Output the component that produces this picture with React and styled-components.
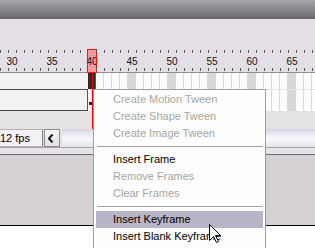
import React from 'react'
import styled, { createGlobalStyle } from 'styled-components'

const GlobalStyle = createGlobalStyle`
  html, body { margin: 0; padding: 0; background: #fff; }
  body { font-family: "Liberation Sans", Arial, sans-serif; }
`

const FIRST_FRAME = 29
const LAST_FRAME = 68
const LAYER_WIDTH = 88
const CURRENT = 40

const rulerFrames = []
for (let f = FIRST_FRAME; f <= LAST_FRAME; f++) rulerFrames.push(f)
const rowFrames = rulerFrames.filter((f) => f >= CURRENT)

const menuItems = [
  { label: 'Create Motion Tween', disabled: true },
  { label: 'Create Shape Tween', disabled: true },
  { label: 'Create Image Tween', disabled: true },
  { sep: true },
  { label: 'Insert Frame' },
  { label: 'Remove Frames', disabled: true },
  { label: 'Clear Frames', disabled: true },
  { sep: true },
  { label: 'Insert Keyframe', active: true },
  { label: 'Insert Blank Keyframe' },
]

const Timeline = () => {
  return (
    <Window>
      <GlobalStyle />
      <TitleBar />
      <ToolStrip />
      <Ruler>
        {rulerFrames.map((f) => (
          <RulerCell key={f} $current={f === CURRENT}>
            {f % 5 === 0 && <RulerNum>{f}</RulerNum>}
          </RulerCell>
        ))}
      </Ruler>

      <Row>
        <LayerName $height={16} />
        <Frames $line>
          {rowFrames.map((f) => (
            <FrameCell key={f} $kind={f === CURRENT ? 'key' : f % 5 === 0 ? 'fifth' : 'plain'} />
          ))}
        </Frames>
      </Row>
      <Row>
        <LayerBox />
        <Frames>
          {rowFrames.map((f) => (
            <FrameCell key={f} $kind={f === CURRENT ? 'blank' : f % 5 === 0 ? 'fifth' : 'plain'}>
              {f === CURRENT && <KeyDot />}
            </FrameCell>
          ))}
        </Frames>
      </Row>

      <GapStrip />

      <StatusBar>
        <FpsBox>12 fps</FpsBox>
        <ArrowButton>
          <svg width="6" height="9" viewBox="0 0 6 9">
            <path d="M4.5 0.5 L1 4.5 L4.5 8.5" fill="none" stroke="#111" strokeWidth="2" />
          </svg>
        </ArrowButton>
        <Track />
      </StatusBar>
      <BottomEdge />
      <Stage />

      <PlayLine />

      <Menu>
        {menuItems.map((item, i) =>
          item.sep ? (
            <Separator key={i} />
          ) : (
            <MenuItem key={i} $disabled={item.disabled} $active={item.active}>
              {item.label}
            </MenuItem>
          )
        )}
      </Menu>

      <Cursor width="13" height="20" viewBox="0 0 13 20">
        <path
          d="M0.5 0.5 L0.5 16.5 L4.5 12.5 L7.5 18.5 L9.5 17.5 L6.5 11.5 L11.5 11.5 Z"
          fill="#fff"
          stroke="#000"
          strokeWidth="1"
        />
      </Cursor>
    </Window>
  )
}

const Window = styled.div`
  position: relative;
  width: 315px;
  height: 248px;
  overflow: hidden;
  background: #fff;
  font-family: "Liberation Sans", Arial, sans-serif;
  font-size: 11px;
`

const TitleBar = styled.div`
  height: 19px;
  background: linear-gradient(#a8a6aa, #8c8a8e 45%, #68666a);
`

const ToolStrip = styled.div`
  height: 30px;
  background: #e4dfe6;
`

const Ruler = styled.div`
  display: flex;
  height: 23px;
  background: #e4dfe6;
  border-bottom: 1px solid #8e8c90;
`

const RulerCell = styled.div`
  flex: none;
  width: 8px;
  box-sizing: border-box;
  display: flex;
  justify-content: center;
  padding-top: 8px;
  background: ${(p) =>
    p.$current
      ? '#f59ba0'
      : `linear-gradient(#555, #555) 0 1px / 1px 3px no-repeat,
         linear-gradient(#555, #555) 0 19px / 1px 3px no-repeat`};
  outline: ${(p) => (p.$current ? '1px solid #ff1010' : 'none')};
  margin-top: ${(p) => (p.$current ? '1px' : '0')};
  ${(p) => p.$current && 'padding-top: 7px;'}
`

const RulerNum = styled.span`
  font-size: 10px;
  line-height: 10px;
  color: #111;
  white-space: nowrap;
`

const Row = styled.div`
  display: flex;
`

const LayerName = styled.div`
  flex: none;
  width: ${LAYER_WIDTH}px;
  height: 16px;
  background: #f3f1f3;
  border-bottom: 1px solid #4a4a4a;
`

const LayerBox = styled.div`
  flex: none;
  box-sizing: border-box;
  width: ${LAYER_WIDTH}px;
  height: 21px;
  background: #f3f1f3;
  border-right: 1px solid #555;
  border-bottom: 1px solid #444;
`

const Frames = styled.div`
  display: flex;
  flex: 1;
  border-bottom: ${(p) => (p.$line ? '1px solid #e2e4e2' : 'none')};
`

const frameBg = {
  key: '#2c2c2c',
  blank: '#f6f6f6',
  fifth: '#d6d8d6',
  plain: '#fbfdfb',
}

const FrameCell = styled.div`
  flex: none;
  position: relative;
  box-sizing: border-box;
  width: 8px;
  background: ${(p) => frameBg[p.$kind]};
  border-right: 1px solid ${(p) => (p.$kind === 'key' ? '#555' : '#d8dbd8')};
`

const KeyDot = styled.span`
  position: absolute;
  left: 1px;
  top: 12px;
  width: 3px;
  height: 3px;
  background: #222;
`

const GapStrip = styled.div`
  height: 18px;
  background: #e3e3e1;
`

const StatusBar = styled.div`
  display: flex;
  height: 18px;
  background: #e3e3e1;
`

const FpsBox = styled.div`
  flex: none;
  box-sizing: border-box;
  width: 43px;
  padding-left: 0;
  border-top: 1px solid #b4b2b6;
  border-bottom: 1px solid #b4b2b6;
  border-right: 1px solid #7c7a7e;
  background: #f3f1f4;
  color: #000;
  line-height: 16px;
  white-space: nowrap;
  overflow: hidden;
`

const ArrowButton = styled.div`
  flex: none;
  box-sizing: border-box;
  width: 16px;
  margin-left: 1px;
  display: flex;
  align-items: center;
  justify-content: center;
  padding-right: 3px;
  border: 1px solid #8e8c90;
  background: linear-gradient(#f6f5f8, #e2e0e6);
`

const Track = styled.div`
  flex: 1;
  margin-left: 2px;
  background: linear-gradient(#d6d4de, #f6f4fa 45%, #f8f6fb 60%, #e4e2ea);
`

const BottomEdge = styled.div`
  height: 6px;
  background: #e6e2e8;
  border-top: 1px solid #a4a2a8;
  border-bottom: 1px solid #6a686c;
`

const Stage = styled.div`
  height: 70px;
  background: #d5d1d5;
  border-bottom: 1px solid #000;
`

const PlayLine = styled.div`
  position: absolute;
  left: 92px;
  top: 73px;
  width: 1px;
  height: 56px;
  background: #ff0000;
`

const Menu = styled.div`
  position: absolute;
  left: 93px;
  top: 89px;
  box-sizing: border-box;
  width: 173px;
  height: 170px;
  padding: 1px 2px 0 2px;
  background: #fcfdfc;
  border: 1px solid #9e9e9e;
  border-bottom: none;
`

const MenuItem = styled.div`
  height: 17px;
  line-height: 17px;
  padding-left: 17px;
  font-size: 11px;
  white-space: nowrap;
  color: ${(p) => (p.$disabled ? '#a6a69e' : '#000')};
  background: ${(p) => (p.$active ? '#b9b5c6' : 'transparent')};
`

const Separator = styled.div`
  height: 1px;
  margin: 4px 0 4px 1px;
  background: #a2a2a2;
`

const Cursor = styled.svg`
  position: absolute;
  left: 209px;
  top: 224px;
`

export default Timeline
